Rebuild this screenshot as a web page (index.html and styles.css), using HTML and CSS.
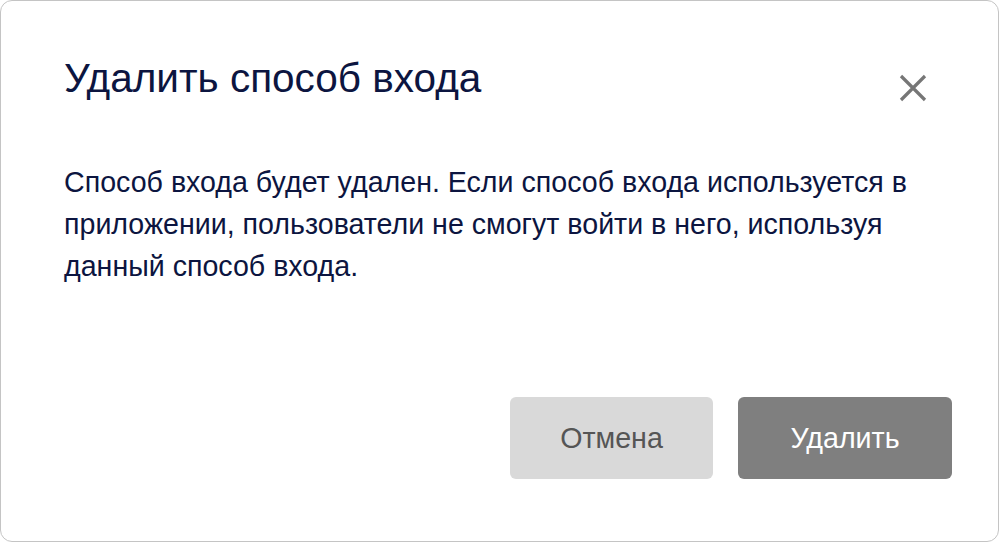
FILE: index.html
```html
<!DOCTYPE html>
<html lang="ru">
<head>
<meta charset="utf-8">
<link rel="stylesheet" href="styles.css">
</head>
<body>
<div class="dialog">
  <div class="header">
    <h1 class="title">Удалить способ входа</h1>
    <button class="close" aria-label="Закрыть">
      <svg width="28" height="28" viewBox="0 0 28 28"><path d="M2 2 L26 26 M26 2 L2 26" stroke="#767676" stroke-width="3.2" stroke-linecap="butt"/></svg>
    </button>
  </div>
  <p class="text">Способ входа будет удален. Если способ входа используется в приложении, пользователи не смогут войти в него, используя данный способ входа.</p>
  <div class="actions">
    <button class="btn btn-cancel">Отмена</button>
    <button class="btn btn-delete">Удалить</button>
  </div>
</div>
</body>
</html>
```
FILE: styles.css
```css
html, body {
  margin: 0;
  padding: 0;
  background: #ffffff;
}
body {
  font-family: "Liberation Sans", Arial, sans-serif;
}
.dialog {
  box-sizing: border-box;
  width: 999px;
  height: 542px;
  border: 1px solid #c4c4c4;
  border-radius: 12px;
  padding: 0 46px 0 63px;
  display: flex;
  flex-direction: column;
}
.header {
  display: flex;
  justify-content: space-between;
  align-items: flex-start;
  margin-top: 52px;
}
.title {
  margin: 0;
  font-size: 40.5px;
  font-weight: normal;
  line-height: 50px;
  color: #0c1540;
}
.close {
  border: none;
  background: none;
  padding: 0;
  margin: 21px 25px 0 0;
  width: 28px;
  height: 28px;
  cursor: pointer;
}
.close svg { display: block; }
.text {
  margin: 58px 0 0 0;
  font-size: 28.6px;
  line-height: 42px;
  color: #0c1540;
  max-width: 870px;
}
.actions {
  margin-top: auto;
  margin-bottom: 62px;
  display: flex;
  justify-content: flex-end;
  gap: 25px;
}
.btn {
  border: none;
  border-radius: 6px;
  height: 82px;
  font-family: "Liberation Sans", Arial, sans-serif;
  font-size: 28.6px;
  cursor: pointer;
}
.btn-cancel {
  width: 203px;
  background: #d9d9d9;
  color: #555555;
}
.btn-delete {
  width: 214px;
  background: #7f7f7f;
  color: #ffffff;
}
```
